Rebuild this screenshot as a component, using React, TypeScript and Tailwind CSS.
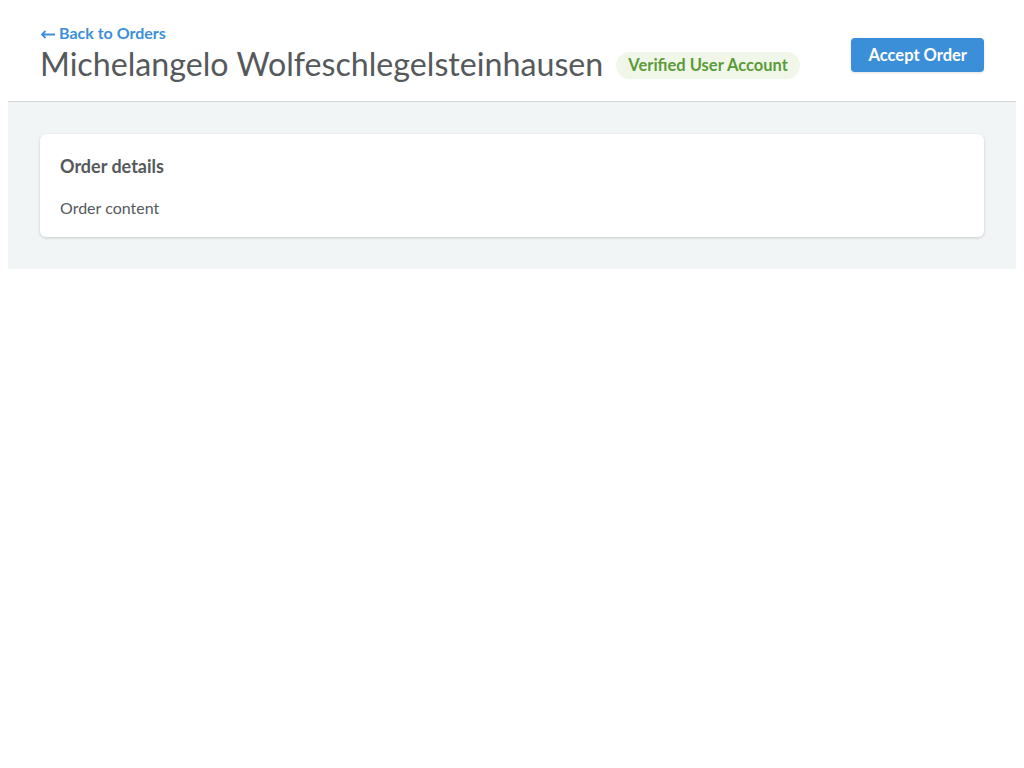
export default function App() {
  return (
    <div className="min-h-screen bg-white px-2 pt-2 font-['Lato','Liberation_Sans',sans-serif] text-[#55595c]">
      {/* Header */}
      <header className="flex items-center justify-between border-b border-[#d3d7da] px-8 pt-[15px] pb-[18px]">
        <div>
          <a href="#" className="ml-[1px] flex items-center gap-1 text-[16px] leading-[20px] font-bold text-[#3d8fd9]">
            <svg width="14" height="9" viewBox="0 0 14 9" className="mt-[2px] shrink-0" fill="none" stroke="currentColor">
              <path d="M1 4.5H14" strokeWidth="2" />
              <path d="M4.5 1L1 4.5L4.5 8" strokeWidth="1.8" strokeLinejoin="miter" />
            </svg>
            <span>Back to Orders</span>
          </a>
          <div className="mt-[2px] flex items-center">
            <h1 className="text-[32.2px] leading-[38px] font-normal text-[#55595c]">
              Michelangelo Wolfeschlegelsteinhausen
            </h1>
            <span className="ml-[13px] mt-[2px] rounded-full bg-[#f1f7e8] px-3 py-[3px] text-[16.5px] leading-[21px] font-bold text-[#5b9b3a]">
              Verified User Account
            </span>
          </div>
        </div>
        <button className="mt-1 rounded bg-[#3b8fd9] px-[17px] py-[6px] text-[16.5px] leading-[22px] font-bold text-white shadow-sm">
          Accept Order
        </button>
      </header>

      {/* Body */}
      <main className="bg-[#f2f5f6] p-8">
        <div className="rounded-md bg-white px-5 pt-5 pb-[17px] shadow-[0_1px_3px_rgba(0,0,0,0.18)]">
          <h2 className="mb-[18px] text-[18px] leading-[24px] font-bold text-[#55595c]">Order details</h2>
          <p className="text-[16px] leading-[24px] text-[#55595c]">Order content</p>
        </div>
      </main>
    </div>
  );
}
